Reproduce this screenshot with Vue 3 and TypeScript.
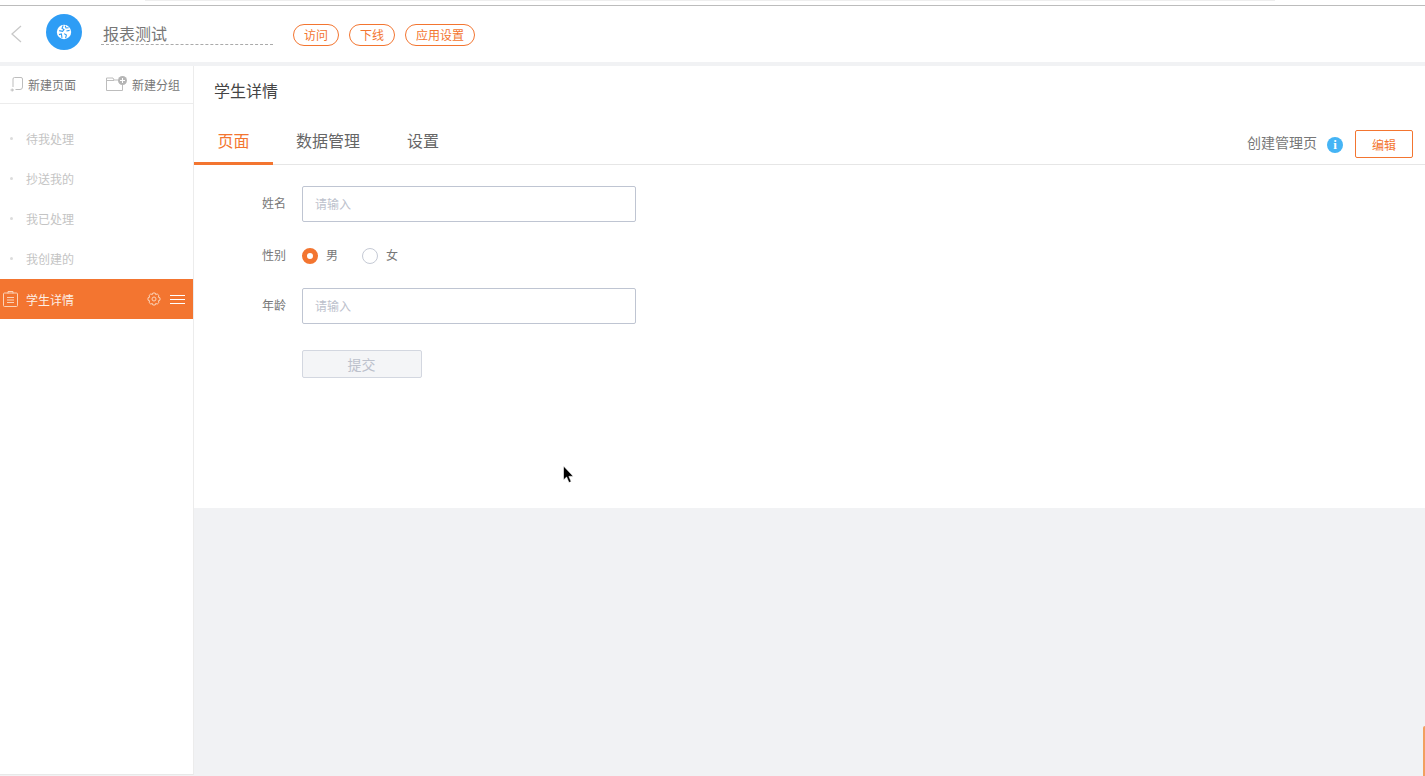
<script setup lang="ts">
const menu: string[] = ['待我处理', '抄送我的', '我已处理', '我创建的']
const tabs: string[] = ['页面', '数据管理', '设置']
const actions: string[] = ['访问', '下线', '应用设置']
</script>

<template>
  <div class="page">
    <div class="topline"><span class="faint"></span></div>
    <header class="header">
      <svg class="back" width="12" height="18" viewBox="0 0 12 18"><path d="M11 1 L2 9 L11 17" fill="none" stroke="#c8c8c8" stroke-width="1.3" /></svg>
      <div class="logo">
        <svg width="16" height="16" viewBox="0 0 16 16">
          <circle cx="8" cy="8" r="7.2" fill="#fff" />
          <path d="M7.2 1.6 L6 4.2 L8 5.6 L6.6 7.4 L3.2 6.6 M9.2 1.8 L10 4 L12.6 3.8 M10.4 7 L13.6 6.4 M8.2 9.6 L10.4 11 L9.6 14.2 M3 10.6 L5.4 10 L6 13.8" fill="none" stroke="#2e9df5" stroke-width="1.1" />
        </svg>
      </div>
      <div class="appname">报表测试</div>
      <div class="actions">
        <span v-for="a in actions" :key="a" class="pill">{{ a }}</span>
      </div>
    </header>
    <div class="body">
      <aside class="side">
        <div class="side-head">
          <span class="sh-item first">
            <svg width="14" height="16" viewBox="0 0 14 16"><path d="M3 11 V3 Q3 1.5 4.5 1.5 H11 Q12.5 1.5 12.5 3 V11 Q12.5 13.5 10 13.5 H5.5" fill="none" stroke="#bdbdbd" /><path d="M0.5 14 H4 M2.2 12.5 V15.5" stroke="#bdbdbd" fill="none" /></svg>
            新建页面
          </span>
          <span class="sh-item second">
            <svg width="22" height="16" viewBox="0 0 22 16"><path d="M0.5 2 H7 L8 4 H12 M0.5 2 V14.5 H16.5 V9 M0.5 4.5 H8" fill="none" stroke="#bdbdbd" /><circle cx="16.5" cy="4.5" r="4.5" fill="#b5b5b5" /><path d="M14 4.5 H19 M16.5 2 V7" stroke="#fff" /></svg>
            新建分组
          </span>
        </div>
        <ul class="menu">
          <li v-for="m in menu" :key="m" class="menu-item"><i class="dot"></i>{{ m }}</li>
          <li class="menu-item active">
            <svg class="clip" width="15" height="16" viewBox="0 0 15 16" fill="none" stroke="#fbd3b8"><rect x="0.5" y="2" width="14" height="13.5" rx="1" /><path d="M5 2.5 V0.5 H10 V2.5 M4 6.5 H11 M4 9 H11 M4 11.5 H11" /></svg>
            <span class="active-label">学生详情</span>
            <svg class="gear" width="14" height="14" viewBox="0 0 14 14" fill="none" stroke="#fbd3b8"><path d="M5.8 1 H8.2 L8.7 2.6 L10.2 1.9 L12 3.6 L11.3 5.2 L13 5.8 V8.2 L11.3 8.8 L12 10.4 L10.2 12.1 L8.7 11.4 L8.2 13 H5.8 L5.3 11.4 L3.8 12.1 L2 10.4 L2.7 8.8 L1 8.2 V5.8 L2.7 5.2 L2 3.6 L3.8 1.9 L5.3 2.6 Z" /><circle cx="7" cy="7" r="2" /></svg>
            <span class="burger"><i></i><i></i><i></i></span>
          </li>
        </ul>
      </aside>
      <main class="main">
        <section class="panel">
          <h1 class="title">学生详情</h1>
          <div class="tabs">
            <span v-for="(t, i) in tabs" :key="t" class="tab" :class="{ on: i === 0 }">{{ t }}</span>
            <div class="tabs-right">
              <span class="create">创建管理页</span>
              <span class="info">i</span>
              <button class="edit" type="button">编辑</button>
            </div>
          </div>
          <form class="form">
            <div class="row r1">
              <label class="lbl">姓名</label>
              <div class="input">请输入</div>
            </div>
            <div class="row r2">
              <label class="lbl">性别</label>
              <span class="radio on"></span><span class="rtext">男</span>
              <span class="radio second"></span><span class="rtext">女</span>
            </div>
            <div class="row r3">
              <label class="lbl">年龄</label>
              <div class="input">请输入</div>
            </div>
            <div class="row r4">
              <span class="submit">提交</span>
            </div>
          </form>
        </section>
      </main>
    </div>
    <svg class="cursor" width="14" height="20" viewBox="0 0 14 20"><path d="M1.5 1 V15 L4.6 12 L7 17.6 L9.2 16.6 L6.9 11.4 L11.2 11.2 Z" fill="#000" stroke="#fff" stroke-width="0.6" /></svg>
    <i class="edge"></i>
  </div>
</template>

<style>
html, body { margin: 0; padding: 0; background: #f1f2f4; overflow: hidden; }
</style>

<style scoped>
.page {
  position: relative;
  width: 1425px;
  height: 776px;
  overflow: hidden;
  background: #f1f2f4;
  font-family: "Noto Sans CJK SC", "Liberation Sans", sans-serif;
  display: flex;
  flex-direction: column;
}
.topline {
  height: 5px;
  background: #fff;
  border-bottom: 1px solid #bcbcbc;
  flex: none;
  display: flex;
  padding-left: 145px;
}
.faint { display: block; width: 1130px; height: 1px; background: #eeeeee; }
.header {
  height: 56px;
  flex: none;
  background: #fff;
  display: flex;
  align-items: center;
}
.back { margin-left: 10px; margin-top: -1px; flex: none; }
.logo {
  width: 36px;
  height: 36px;
  border-radius: 50%;
  background: #2e9df5;
  margin-left: 24px;
  margin-top: -4px;
  display: flex;
  align-items: center;
  justify-content: center;
  flex: none;
}
.appname {
  margin-left: 19px;
  width: 170px;
  height: 22px;
  padding-left: 2px;
  line-height: 22px;
  font-size: 16px;
  color: #777;
  border-bottom: 1px dashed #aaa;
  margin-top: -1px;
}
.actions { display: flex; gap: 10px; margin-left: 20px; margin-top: 1px; }
.pill {
  height: 20px;
  line-height: 20px;
  padding: 0 10px;
  border: 1px solid #f37530;
  border-radius: 11px;
  color: #f37530;
  font-size: 12px;
}
.body {
  flex: 1;
  margin-top: 4px;
  display: flex;
  min-height: 0;
}
.side {
  width: 193px;
  background: #fff;
  border-right: 1px solid #ececec;
  border-bottom: 1px solid #e8e8e8;
  height: 708px;
  flex: none;
}
.side-head {
  height: 37px;
  border-bottom: 1px solid #ececec;
  display: flex;
  align-items: center;
  font-size: 12px;
  color: #777;
}
.sh-item { display: flex; align-items: center; gap: 4px; }
.sh-item svg { margin-top: -2px; }
.first { margin-left: 10px; }
.second { margin-left: 30px; }
.menu { list-style: none; margin: 15px 0 0; padding: 0; }
.menu-item {
  height: 38px;
  padding-bottom: 2px;
  display: flex;
  align-items: center;
  font-size: 12px;
  color: #c4c4c4;
  padding-left: 10px;
}
.dot {
  width: 3px;
  height: 3px;
  border-radius: 50%;
  background: #dcdcdc;
  margin-right: 13px;
}
.active {
  height: 40px;
  padding-bottom: 0;
  background: #f37530;
  color: #fdeee4;
  padding-left: 3px;
}
.active-label { margin-left: 8px; }
.gear { margin-left: auto; }
.burger {
  width: 15px;
  margin-left: 9px;
  margin-right: 8px;
  display: flex;
  flex-direction: column;
  gap: 3px;
}
.burger i { display: block; height: 1px; background: #fff; }
.main { flex: 1; min-width: 0; }
.panel { background: #fff; height: 442px; }
.title {
  margin: 0;
  height: 54px;
  padding-left: 20px;
  font-size: 16px;
  font-weight: 400;
  line-height: 48px;
  color: #444;
}
.tabs {
  height: 44px;
  border-bottom: 1px solid #e6e6e6;
  display: flex;
}
.tab {
  width: 79px;
  height: 45px;
  line-height: 41px;
  text-align: center;
  font-size: 16px;
  color: #666;
  box-sizing: border-box;
}
.tab:nth-child(2) { width: 110px; }
.tab:nth-child(3) { width: 80px; }
.tab.on { color: #f37530; border-bottom: 3px solid #f37530; }
.tabs-right {
  margin-left: auto;
  display: flex;
  align-items: center;
  padding-right: 12px;
  height: 44px;
  margin-top: 2px;
}
.create { font-size: 14px; color: #777; margin-top: -4px; }
.info {
  width: 16px;
  height: 16px;
  margin-left: 10px;
  margin-top: 1px;
  border-radius: 50%;
  background: #45b4f5;
  color: #fff;
  font: 700 13px/16px "Liberation Serif", serif;
  text-align: center;
}
.edit {
  width: 58px;
  height: 28px;
  margin-left: 12px;
  padding: 0;
  background: #fff;
  border: 1px solid #f37530;
  border-radius: 2px;
  color: #f37530;
  font-size: 12px;
  font-family: inherit;
}
.form { padding-left: 68px; display: flex; flex-direction: column; }
.row { display: flex; align-items: center; }
.r1 { margin-top: 21px; }
.r2 { margin-top: 18px; height: 32px; }
.r3 { margin-top: 16px; }
.r4 { margin-top: 26px; padding-left: 40px; }
.lbl { width: 24px; font-size: 12px; line-height: 16px; margin-top: -2px; color: #777; margin-right: 16px; flex: none; }
.input {
  width: 320px;
  height: 34px;
  line-height: 33px;
  border: 1px solid #bfc5d2;
  border-radius: 2px;
  padding-left: 12px;
  font-size: 12px;
  color: #bcc1cc;
}
.radio {
  width: 14px;
  height: 14px;
  border: 1px solid #c5cad5;
  border-radius: 50%;
  background: #fff;
  flex: none;
}
.radio.on { width: 6px; height: 6px; border: 5px solid #f37530; }
.radio.second { margin-left: 24px; }
.rtext { margin-left: 8px; font-size: 12px; color: #777; margin-top: -2px; line-height: 16px; }
.submit {
  width: 118px;
  height: 26px;
  line-height: 26px;
  text-align: center;
  border: 1px solid #d3d7e0;
  border-radius: 2px;
  background: #f4f5f7;
  color: #bcc1cc;
  font-size: 14px;
  text-indent: -1px;
}
.cursor { position: absolute; left: 562px; top: 465px; }
.edge {
  position: absolute;
  right: 0;
  top: 726px;
  width: 2px;
  height: 50px;
  background: #f2a060;
  border-radius: 2px 0 0 0;
}
</style>
